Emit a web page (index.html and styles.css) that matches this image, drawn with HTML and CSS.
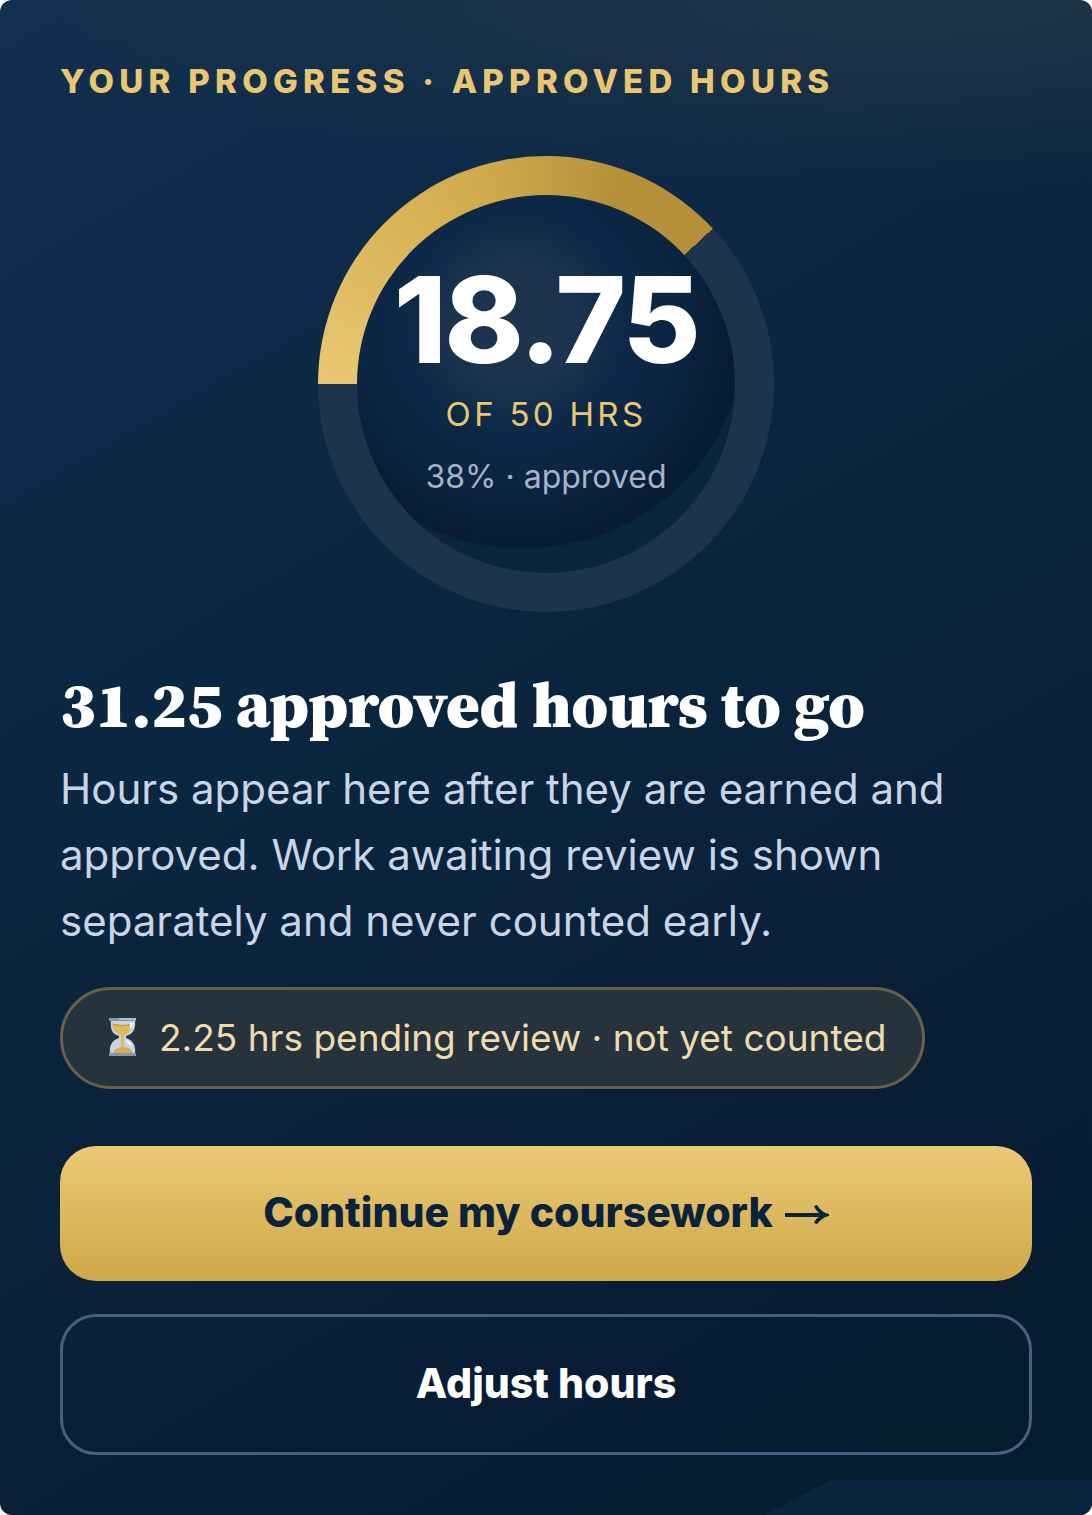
FILE: index.html
```html
<!DOCTYPE html>
<html lang="en">
<head>
    <meta charset="UTF-8">
    <meta name="viewport" content="width=device-width, initial-scale=1.0">
    <title>Your Progress</title>
    <link rel="stylesheet" href="styles.css">
</head>
<body>
    <main class="progress-card">
        <p class="eyebrow">Your progress · Approved hours</p>

        <div class="ring">
            <div class="ring-center">
                <div class="ring-value">18.75</div>
                <div class="ring-total">of 50 hrs</div>
                <div class="ring-note">38% · approved</div>
            </div>
        </div>

        <h1 class="headline">31.25 approved hours to go</h1>
        <p class="summary">Hours appear here after they are earned and approved. Work awaiting review is shown separately and never counted early.</p>

        <div class="pending">
            <svg class="hourglass" viewBox="0 0 48 48" aria-hidden="true">
                <path d="M12 6h24c1 9-2 14-9 16v2c7 2 10 8 9 15H11c-1-7 2-13 9-15v-2c-7-2-9-7-8-16z" fill="#c8d5e6"/>
                <path d="M13 10c3-1 7 1 11 1s7-2 10-1c0 6-4 9-9 11v14h-3V21c-5-2-9-5-9-11z" fill="#e0b95c"/>
                <path d="M13 10c3-1 7 1 11 1s7-2 10-1c-5 3-16 3-21 0z" fill="#c79d3f"/>
                <path d="M14 39c2-4 5-6 10-6s8 2 10 6z" fill="#d9ae4c"/>
                <path d="M31 9h3c0 3-1 5-3 6zM27 26c3 1 5 3 6 6-3-1-5-3-6-6z" fill="#fff"/>
                <path d="M10 4h27v3H10zM10 39h27v3H10z" fill="#8797aa"/>
                <path d="M20 4h17v2H20z" fill="#b0bfd1"/>
            </svg>
            <span>2.25 hrs pending review · not yet counted</span>
        </div>

        <div class="actions">
            <button type="button" class="btn btn-primary">
                Continue my coursework
                <svg class="arrow" viewBox="0 0 44 20" aria-hidden="true">
                    <path d="M0 8h34c-2-2-4-4-5-7l3-1c3 5 7 8 12 9v2c-5 1-9 4-12 8l-3-1c1-3 3-5 5-6H0z" fill="currentColor"/>
                </svg>
            </button>
            <button type="button" class="btn btn-outline">Adjust hours</button>
        </div>
    </main>
</body>
</html>
```
FILE: styles.css
```css
* {
    box-sizing: border-box;
}

body {
    margin: 0;
    font-family: 'Inter', sans-serif;
    background-color: #fff;
    color: #fff;
}

.progress-card {
    position: relative;
    display: flex;
    flex-direction: column;
    min-height: 100vh;
    padding: 60px;
    border-radius: 12px;
    overflow: hidden;
    background:
        radial-gradient(ellipse 80% 13% at 85% 0, rgba(46, 60, 72, 0.6), transparent),
        linear-gradient(150deg, #12304d 0%, #0e2b4a 18%, #0a253e 45%, #0a2038 68%, #081d35 80%, #061c2f 92%);
}

.progress-card::after {
    content: '';
    position: absolute;
    right: 0;
    bottom: 0;
    width: 30%;
    height: 35px;
    background-color: #0a253d;
    clip-path: polygon(67px 0, 100% 0, 100% 100%, 0 100%);
}

.eyebrow {
    margin: 0 0 54px;
    font-size: 33px;
    line-height: 42px;
    font-weight: 800;
    letter-spacing: 0.16em;
    text-transform: uppercase;
    color: #e9c772;
}

.ring {
    display: flex;
    align-self: center;
    width: 456px;
    height: 456px;
    padding: 39px;
    border-radius: 50%;
    background: conic-gradient(from 270deg, #e9c772 0deg, #cfa94b 75deg, #b68f3a 110deg, #b68f3a 137deg, #1e344c 137deg);
}

.ring-center {
    display: flex;
    flex: 1;
    flex-direction: column;
    align-items: center;
    justify-content: center;
    padding-bottom: 9px;
    border-radius: 50%;
    background:
        radial-gradient(ellipse 218px 203px at 44% 40%, transparent 99%, #0a253e 100%),
        radial-gradient(circle at 42% 34%, #1e344c 0, #1b334e 60px, #0e2a49 105px, #0b2542 160px, #071b31 225px);
}

.ring-value {
    font-size: 120px;
    line-height: 117px;
    font-weight: 800;
    letter-spacing: -0.02em;
}

.ring-total {
    margin-top: 15px;
    font-size: 33px;
    line-height: 42px;
    letter-spacing: 0.1em;
    text-transform: uppercase;
    color: #e9c772;
}

.ring-note {
    margin-top: 21px;
    font-size: 32px;
    line-height: 42px;
    color: #a5b4c8;
}

.headline {
    margin: 57px 0 15px;
    font-family: 'Source Serif 4', 'Liberation Serif', serif;
    font-size: 64px;
    line-height: 72px;
    font-weight: 900;
}

.summary {
    margin: 0;
    font-size: 42px;
    line-height: 66px;
    color: #c8d5e6;
}

.pending {
    display: flex;
    align-items: center;
    align-self: flex-start;
    gap: 12px;
    margin-top: 33px;
    padding: 24px 36px;
    border: 3px solid #686147;
    border-radius: 51px;
    background-color: #26333c;
    font-size: 37px;
    line-height: 48px;
    color: #efdcae;
}

.hourglass {
    width: 48px;
    height: 48px;
}

.actions {
    display: flex;
    flex-direction: column;
    gap: 33px;
    margin-top: 57px;
}

.btn {
    display: flex;
    align-items: center;
    justify-content: center;
    gap: 12px;
    padding: 42px 42px 45px;
    border: none;
    border-radius: 36px;
    font-family: inherit;
    font-size: 41px;
    line-height: 48px;
    font-weight: 800;
    cursor: pointer;
}

.btn-primary {
    background: linear-gradient(#ebca76, #cea849);
    color: #0a223b;
}

.arrow {
    width: 44px;
    height: 20px;
    margin-top: 6px;
}

.btn-outline {
    border: 3px solid #48607f;
    background: transparent;
    color: #fff;
}
```
